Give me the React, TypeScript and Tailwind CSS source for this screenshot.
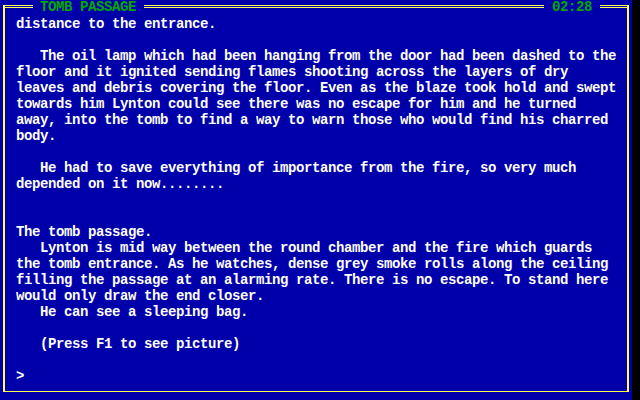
import React from 'react';

const lines: string[] = [
  'distance to the entrance.',
  '',
  '   The oil lamp which had been hanging from the door had been dashed to the',
  'floor and it ignited sending flames shooting across the layers of dry',
  'leaves and debris covering the floor. Even as the blaze took hold and swept',
  'towards him Lynton could see there was no escape for him and he turned',
  'away, into the tomb to find a way to warn those who would find his charred',
  'body.',
  '',
  '   He had to save everything of importance from the fire, so very much',
  'depended on it now........',
  '',
  '',
  'The tomb passage.',
  '   Lynton is mid way between the round chamber and the fire which guards',
  'the tomb entrance. As he watches, dense grey smoke rolls along the ceiling',
  'filling the passage at an alarming rate. There is no escape. To stand here',
  'would only draw the end closer.',
  '   He can see a sleeping bag.',
  '',
  '   (Press F1 to see picture)',
  '',
  '>',
];

const Rule = ({ className }: { className: string }) => (
  <div className={`h-[3px] border-y border-[#ffff55] ${className}`}></div>
);

export default function App() {
  return (
    <div className="w-[640px] h-[400px] bg-black flex font-['Liberation_Mono',monospace] font-bold text-[14px] tracking-[-0.4px]">
      <div className="w-[632px] h-full bg-[#0000aa] pt-[5px] pl-[3px]">
        <div className="w-[626px] h-[387px] border-x-2 border-b border-[#ffff55] flex flex-col">
          {/* title bar over the double top line */}
          <div className="flex items-center h-[3px] -mx-[2px]">
            <Rule className="w-[30px]" />
            <span className="ml-[7px] mr-[8px] w-[96px] leading-[16px] text-[#00aa00] whitespace-pre">
              TOMB PASSAGE
            </span>
            <Rule className="flex-1" />
            <span className="mx-[8px] w-[40px] leading-[16px] text-[#00aa00]">02:28</span>
            <Rule className="w-[29px]" />
          </div>
          <div className="pt-[8px] pl-[11px] text-white">
            {lines.map((line, i) => (
              <div key={i} className="h-4 leading-[16px] whitespace-pre">
                {line}
              </div>
            ))}
          </div>
        </div>
      </div>
    </div>
  );
}
